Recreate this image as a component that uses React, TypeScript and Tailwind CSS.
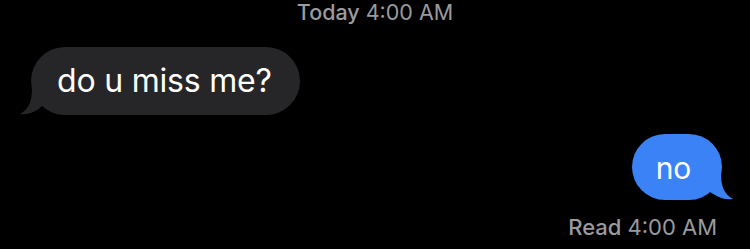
import React from "react";

export default function App() {
  return (
    <div
      className="w-[750px] h-[249px] bg-black flex flex-col overflow-hidden"
      style={{ fontFamily: "Inter, 'Liberation Sans', sans-serif" }}
    >
      <div className="h-[30px] flex items-center justify-center text-[21.5px] text-[#9a9a9f] leading-none pb-[4px]">
        <span className="font-medium">Today</span>
        <span className="ml-[6px]">4:00 AM</span>
      </div>
      <div className="mt-[17px] pl-[31px] flex">
        <div className="relative">
          <svg
            className="absolute left-[-14px] bottom-[-2px]"
            width="34"
            height="28"
            viewBox="0 0 34 28"
          >
            <path
              d="M15 0 C15 12 12 20 3 25 C12 26.5 20 22 26 16 L34 16 L34 0 Z"
              fill="#262629"
            />
          </svg>
          <div className="relative h-[68px] rounded-[34px] bg-[#262629] pl-[26px] pr-[28px] flex items-center text-white text-[32px] tracking-[-0.2px]">
            do u miss me?
          </div>
        </div>
      </div>
      <div className="mt-[19px] pr-[28px] flex justify-end">
        <div className="relative">
          <svg
            className="absolute right-[-14px] bottom-[-2px]"
            width="34"
            height="28"
            viewBox="0 0 34 28"
          >
            <path
              d="M19 0 C19 12 22 20 31 25 C22 26.5 14 22 8 18 L0 18 L0 0 Z"
              fill="#3b82f6"
            />
          </svg>
          <div className="relative h-[66px] w-[90px] rounded-[33px] bg-[#3b82f6] flex items-center justify-center text-white text-[30px] pt-[2px] pr-[7px]">
            no
          </div>
        </div>
      </div>
      <div className="mt-[16px] pr-[33px] flex justify-end text-[22px] text-[#9a9a9f] leading-none">
        <span className="font-medium">Read</span>
        <span className="ml-[6px]">4:00 AM</span>
      </div>
    </div>
  );
}
